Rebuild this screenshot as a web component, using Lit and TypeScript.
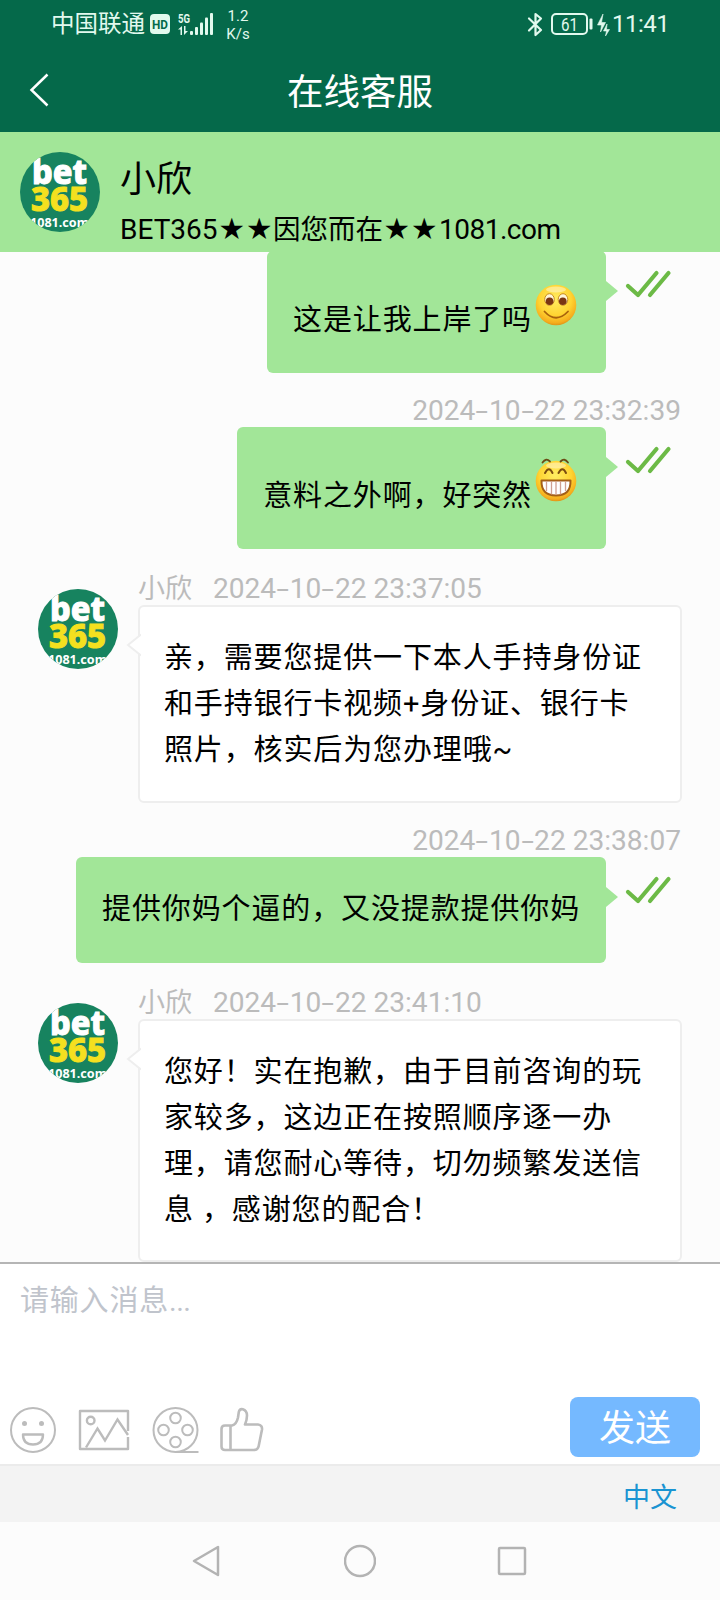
import { LitElement, html, css, svg } from "lit";
import { customElement, property } from "lit/decorators.js";

interface Message {
  from: "me" | "agent";
  time: string;
  lines: string[];
  emoji?: "smile" | "grin";
}

const AGENT = "小欣";

const MESSAGES: Message[] = [
  { from: "me", time: "", lines: ["这是让我上岸了吗"], emoji: "smile" },
  { from: "me", time: "2024-10-22 23:32:39", lines: ["意料之外啊，好突然"], emoji: "grin" },
  {
    from: "agent",
    time: "2024-10-22 23:37:05",
    lines: ["亲，需要您提供一下本人手持身份证", "和手持银行卡视频+身份证、银行卡", "照片，核实后为您办理哦~"],
  },
  { from: "me", time: "2024-10-22 23:38:07", lines: ["提供你妈个逼的，又没提款提供你妈"] },
  {
    from: "agent",
    time: "2024-10-22 23:41:10",
    lines: ["您好！实在抱歉，由于目前咨询的玩", "家较多，这边正在按照顺序逐一办", "理，请您耐心等待，切勿频繁发送信", "息 ，感谢您的配合！"],
  },
];

@customElement("brand-avatar")
export class BrandAvatar extends LitElement {
  static styles = css`
    :host { display: block; width: 80px; height: 80px; flex: none; }
    svg { display: block; }
    text { font-family: "Noto Sans", "Open Sans", sans-serif; }
    .big { font-weight: 800; font-size: 33px; }
    .small { font-weight: 700; font-size: 13px; }
  `;
  render() {
    return html`<svg width="80" height="80" viewBox="0 0 80 80">
      <defs><clipPath id="c"><circle cx="40" cy="40" r="40" /></clipPath></defs>
      <g clip-path="url(#c)">
        <rect width="80" height="80" fill="#17835f" />
        <text class="big" x="12" y="32" textLength="55" lengthAdjust="spacingAndGlyphs" fill="#fff" stroke="#fff" stroke-width="1">bet</text>
        <text class="big" x="11" y="58.6" textLength="57" lengthAdjust="spacingAndGlyphs" fill="#f4e01f" stroke="#f4e01f" stroke-width="1">365</text>
        <text class="small" x="10" y="75.2" textLength="59" lengthAdjust="spacingAndGlyphs" fill="#fff">1081.com</text>
      </g>
    </svg>`;
  }
}

@customElement("emoji-face")
export class EmojiFace extends LitElement {
  @property() kind: "smile" | "grin" = "smile";
  static styles = css`
    :host { display: block; width: 48px; height: 48px; flex: none; }
    svg { display: block; }
  `;
  render() {
    const smile = svg`
      <ellipse cx="17.5" cy="17.5" rx="4.8" ry="5.8" fill="#fff6d8" stroke="#c98a1c" stroke-width="1" />
      <ellipse cx="31" cy="17.5" rx="4.8" ry="5.8" fill="#fff6d8" stroke="#c98a1c" stroke-width="1" />
      <circle cx="17.6" cy="19.2" r="3.8" fill="#7a3512" />
      <circle cx="30.8" cy="19.2" r="3.8" fill="#7a3512" />
      <path d="M12.500 29.500q11.500 12.500 23.500 0" fill="none" stroke="#a8620c" stroke-width="1.800" stroke-linecap="round" />`;
    const grin = svg`
      <path d="M10.500 4.500q3.500-5 7.500-1M28.500 3.500q4-4 7.500 1" fill="none" stroke="#6b4a14" stroke-width="1.800" stroke-linecap="round" />
      <path d="M13 15q4-7.500 7.500 0M26.500 15q4-7.500 7.500 0" fill="none" stroke="#7c4d10" stroke-width="2" stroke-linecap="round" />
      <path d="M9.500 22.500h29q.5 15-14.500 15t-14.500-15z" fill="#fff" stroke="#a45f16" stroke-width="2" stroke-linejoin="round" />
      <path d="M14.500 23v10M19.500 23v13.500M24 23v14M28.500 23v13.500M33.500 23v10" stroke="#cf9f91" stroke-width="1.300" />`;
    return html`<svg width="48" height="48" viewBox="0 0 48 48">
      <defs>
        <radialGradient id="g" cx=".48" cy=".36" r=".66">
          <stop offset="0" stop-color="#ffec62" />
          <stop offset=".6" stop-color="#ffd432" />
          <stop offset=".88" stop-color="#f5ad1d" />
          <stop offset="1" stop-color="#d98c14" />
        </radialGradient>
      </defs>
      <circle cx="24" cy="23" r="20.300" fill="url(#g)" />
      <ellipse cx="24" cy="7.500" rx="10" ry="3" fill="#fff" opacity=".4" />
      ${this.kind === "smile" ? smile : grin}
    </svg>`;
  }
}

@customElement("time-stamp")
export class TimeStamp extends LitElement {
  @property() value = "";
  static styles = css`
    :host { display: inline-block; white-space: pre; font-family: Roboto, "Noto Sans CJK SC", sans-serif; font-size: 28.100px; }
    .dash { display: inline-block; width: 13.6px; text-align: center; transform: scaleX(1.6); }
  `;
  render() {
    return this.value.split("-").map((part, i) => (i ? html`<span class="dash">-</span>${part}` : part));
  }
}

@customElement("chat-message")
export class ChatMessage extends LitElement {
  @property({ attribute: false }) message!: Message;
  static styles = css`
    :host { display: block; }
    .meta { height: 36px; line-height: 40px; font-size: 27px; color: #bbb; white-space: pre; }
    .mine { display: flex; flex-direction: column; align-items: flex-end; padding: 18px 39px 0 0; }
    .mine.first { padding-top: 0; margin-top: -1px; }
    .row { display: flex; align-items: flex-start; }
    .line { height: 46px; line-height: 48px; white-space: pre; font-size: 29px; letter-spacing: 0.87px; }
    .bubble { position: relative; display: flex; align-items: flex-start; box-sizing: border-box; height: 106px; padding: 28px 26px 0; border-radius: 6px; background: #a2e698; }
    .bubble.rich { height: 122px; }
    .rich .line { margin-top: 17px; }
    .rich emoji-face { margin-top: 3px; }
    .tail { position: absolute; left: 100%; top: 30px; display: block; }
    .checks { display: block; margin: 17px 8px 0 18px; }
    .theirs { display: flex; padding: 20px 38px 0 38px; }
    .theirs brand-avatar { margin-top: 20px; }
    .body { flex: 1; margin-left: 20px; }
    .name { margin-right: 21px; }
    .card { position: relative; box-sizing: border-box; background: #fff; border: 2px solid #eee; border-radius: 6px; padding: 27px 0 29px 24px; }
    .card.last { padding-bottom: 28px; }
    .nib { position: absolute; left: -14px; top: 26px; display: block; }
  `;
  render() {
    const m = this.message;
    const lines = m.lines.map((l) => html`<div class="line">${l}</div>`);
    if (m.from === "me") {
      return html`<div class="mine ${m.time ? "" : "first"}">
        ${m.time ? html`<div class="meta"><time-stamp .value=${m.time}></time-stamp></div>` : null}
        <div class="row">
          <div class="bubble ${m.emoji ? "rich" : ""}">
            ${lines}${m.emoji ? html`<emoji-face .kind=${m.emoji}></emoji-face>` : null}
            <svg class="tail" width="12" height="20"><path d="M0 0l12 10L0 20z" fill="#a2e698" /></svg>
          </div>
          <svg class="checks" width="49" height="32" fill="none" stroke="#6cba46" stroke-width="4.200" stroke-linecap="round" stroke-linejoin="round">
            <path d="M4 18l10 9L32.500 5M26 27L44.500 5" />
          </svg>
        </div>
      </div>`;
    }
    return html`<div class="theirs">
      <brand-avatar></brand-avatar>
      <div class="body">
        <div class="meta"><span class="name">${AGENT}</span><time-stamp .value=${m.time}></time-stamp></div>
        <div class="card ${m.lines.length > 3 ? "last" : ""}">
          ${lines}
          <svg class="nib" width="15" height="24"><path d="M15 1.500L2 12l13 10.500" fill="#fff" stroke="#eee" stroke-width="2" /></svg>
        </div>
      </div>
    </div>`;
  }
}

@customElement("app-root")
export class AppRoot extends LitElement {
  static styles = css`
    :host { display: flex; flex-direction: column; width: 720px; height: 1600px; overflow: hidden; background: #fcfcfc; color: #000; font-family: Roboto, "Noto Sans CJK SC", sans-serif; }
    svg { display: block; flex: none; }
    .top { height: 132px; flex: none; background: #05694a; color: #fff; }
    .status { display: flex; align-items: center; height: 48px; padding: 0 52px 0 51px; color: #e2f9ee; }
    .carrier { font-size: 23.5px; line-height: 50px; width: 99px; }
    .net { margin-left: 7px; }
    .rate { width: 26px; margin-left: 11px; padding-top: 2px; font-size: 15px; line-height: 18px; text-align: center; }
    .spacer { flex: 1; }
    .batt { margin-left: 8px; }
    .clock { font-size: 24px; margin-left: 2px; width: 56px; white-space: nowrap; letter-spacing: -0.500px; line-height: 50px; }
    .net text, .hd text, .batt text { font-family: Roboto, sans-serif; }
    .nav { display: grid; grid-template-columns: 60px 1fr 60px; align-items: center; height: 84px; }
    .back { margin-left: 29px; }
    .title { height: 84px; text-align: center; font-size: 36.500px; line-height: 90px; }
    .agent { display: flex; flex: none; box-sizing: border-box; height: 120px; padding: 20px 20px 0; background: #a2e698; }
    .who { margin-left: 20px; white-space: nowrap; }
    .who-name { font-size: 36px; height: 54px; line-height: 57px; }
    .who-sub { display: flex; font-size: 27.500px; height: 46px; line-height: 47px; }
    .latin { font-size: 28px; width: 98px; }
    .latin.site { width: auto; margin-left: 1px; letter-spacing: -0.500px; }
    .star { width: 27.500px; font-size: 24px; text-align: center; }
    .chat { height: 1010px; flex: none; overflow: hidden; }
    .composer { display: flex; flex-direction: column; justify-content: space-between; box-sizing: border-box; height: 202px; flex: none; border-top: 2px solid #b5b5b5; background: #fff; }
    .hint { padding: 13px 20px 0; height: 46px; line-height: 49px; font-size: 29px; letter-spacing: 0.800px; color: #c0c4cc; }
    .dots { letter-spacing: -0.500px; }
    .tools { display: flex; align-items: center; padding: 0 20px 7px 9px; height: 60px; }
    .tools svg { margin-top: 6px; }
    .tools .t-image { margin-left: 21px; }
    .tools .t-reel { margin-left: 22px; }
    .tools .t-like { margin-left: 20px; }
    .send { width: 130px; height: 60px; border-radius: 8px; background: #75b9ff; color: #fff; font-size: 36px; line-height: 65px; text-align: center; }
    .lang { box-sizing: border-box; height: 58px; flex: none; border-top: 2px solid #ebebeb; background: #f3f3f3; padding-right: 43px; text-align: right; color: #1a94d2; font-size: 27px; line-height: 65px; }
    .keys { display: flex; align-items: center; justify-content: center; flex: 1; gap: 120px; }
  `;

  render() {
    return html`
      <div class="top">
        <div class="status">
          <span class="carrier">中国联通</span>
          <svg class="hd" width="20" height="20">
            <rect width="20" height="20" rx="4" fill="#e2f9ee" />
            <text x="2" y="15" font-size="13" font-weight="700" textLength="16" lengthAdjust="spacingAndGlyphs" fill="#05694a">HD</text>
          </svg>
          <svg class="net" width="37" height="24" fill="#e2f9ee">
            <text x="1" y="11" font-size="12.500" font-weight="700" textLength="12" lengthAdjust="spacingAndGlyphs">5G</text>
            <path d="M1 17.500l4-3.500v9H3.500v-5.500zM7 14h1.500v5H11l-4 4z" />
            <rect x="13" y="19" width="3" height="4" rx="1" />
            <rect x="18" y="15" width="3" height="8" rx="1" />
            <rect x="23" y="10.500" width="3" height="12.500" rx="1" />
            <rect x="28" y="5.500" width="3" height="17.500" rx="1" />
            <rect x="33" y="1" width="3" height="22" rx="1" />
          </svg>
          <div class="rate">1.2<br />K/s</div>
          <div class="spacer"></div>
          <svg width="16" height="25" fill="none" stroke="#e2f9ee" stroke-width="2.200" stroke-linejoin="round" stroke-linecap="round">
            <path d="M2 6.500l12 11.500-5.500 5V2l5.500 4.500L2 18.500" />
          </svg>
          <svg class="batt" width="59" height="24">
            <rect x="1" y="2" width="35" height="20" rx="4" fill="none" stroke="#e2f9ee" stroke-width="2" />
            <rect x="38.500" y="6.500" width="3" height="11" rx="1" fill="#e2f9ee" />
            <text x="10" y="19" font-size="18" textLength="17" lengthAdjust="spacingAndGlyphs" fill="#e2f9ee">61</text>
            <path d="M52 2l-5.500 11h4l-1 7 5-9.500h-4zM56 12l-3.500 7h3L54.500 24l4-6.500h-3z" fill="#e2f9ee" stroke="#e2f9ee" stroke-width=".6" />
          </svg>
          <span class="clock">11:41</span>
        </div>
        <div class="nav">
          <svg class="back" width="21" height="34" fill="none" stroke="#fff" stroke-width="2.500"><path d="M18.500 1.500L2.500 17l16 15.500" /></svg>
          <div class="title">在线客服</div>
        </div>
      </div>

      <div class="agent">
        <brand-avatar></brand-avatar>
        <div class="who">
          <div class="who-name">${AGENT}</div>
          <div class="who-sub">
            <span class="latin">BET365</span><span class="star">★</span><span class="star">★</span><span>因您而在</span><span class="star">★</span><span class="star">★</span><span class="latin site">1081.com</span>
          </div>
        </div>
      </div>

      <div class="chat">${MESSAGES.map((m) => html`<chat-message .message=${m}></chat-message>`)}</div>

      <div class="composer">
        <div class="hint">请输入消息<span class="dots">...</span></div>
        <div class="tools">
          <svg width="48" height="48" fill="none" stroke="#bcbcbc" stroke-width="2">
            <circle cx="24" cy="24" r="22" />
            <circle cx="15.500" cy="17.500" r="2.500" fill="#bcbcbc" stroke="none" />
            <circle cx="32.500" cy="17.500" r="2.500" fill="#bcbcbc" stroke="none" />
            <path d="M14 28.500h20q0 10-10 10t-10-10z" stroke-width="2.400" stroke-linejoin="round" />
          </svg>
          <svg class="t-image" width="52" height="48" fill="none" stroke="#bcbcbc" stroke-width="2.400">
            <path d="M50 31V43H2V5H50V25" stroke-linejoin="round" />
            <circle cx="12.700" cy="14.500" r="3.800" />
            <path d="M8 41.500L19.500 22.500 27 34.500 39.500 13.500 50 29" />
          </svg>
          <svg class="t-reel" width="48" height="48" fill="none" stroke="#bcbcbc" stroke-width="2">
            <circle cx="23.500" cy="24" r="22" />
            <circle cx="23.500" cy="12" r="5.300" />
            <circle cx="11.500" cy="24" r="5.300" />
            <circle cx="35.500" cy="24" r="5.300" />
            <circle cx="23.500" cy="36" r="5.300" />
            <path d="M23.500 46H46.500" />
          </svg>
          <svg class="t-like" width="44" height="48" fill="none" stroke="#bcbcbc" stroke-width="2.600" stroke-linejoin="round">
            <path d="M5 19.500h7q4.500-1 6-8l.8-5.500q.8-3.500 4-2.800 4.200 1.300 4.200 6.300 0 4.500-2 9H38q4.500.5 4 5l-3.300 16.500q-.8 4-5 4H5q-3.500 0-3.500-3.500V23q0-3.500 3.500-3.500zM10.500 19.500v24.500" />
          </svg>
          <div class="spacer"></div>
          <div class="send">发送</div>
        </div>
      </div>

      <div class="lang">中文</div>

      <div class="keys">
        <svg width="32" height="34" fill="none" stroke="#b3b3b3" stroke-width="2.500" stroke-linejoin="round"><path d="M26 3v28L2 17z" /></svg>
        <svg width="32" height="34" fill="none" stroke="#b3b3b3" stroke-width="2.500"><circle cx="16" cy="17" r="15" /></svg>
        <svg width="32" height="34" fill="none" stroke="#b3b3b3" stroke-width="2.500"><rect x="3" y="4" width="26" height="26" rx="1" /></svg>
      </div>
    `;
  }
}
